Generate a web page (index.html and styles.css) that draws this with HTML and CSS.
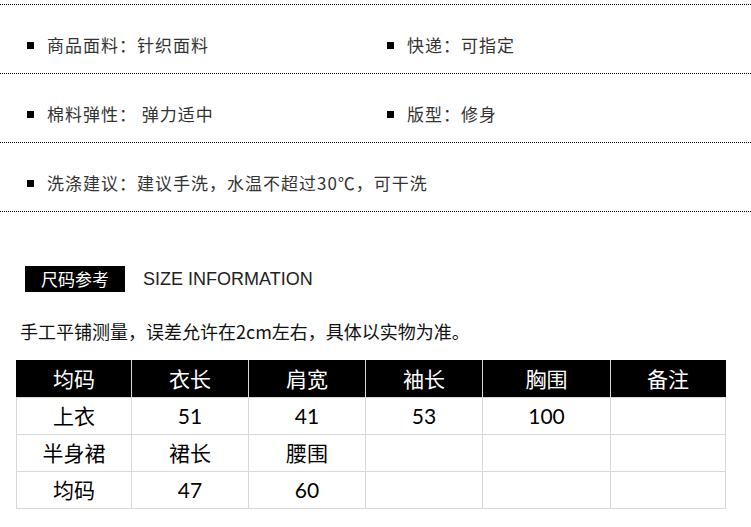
FILE: index.html
```html
<!DOCTYPE html>
<html lang="zh">
<head>
<meta charset="utf-8">
<title>商品信息</title>
<link rel="stylesheet" href="styles.css">
</head>
<body>
<div class="specs">
  <div class="spec-row">
    <div class="spec"><span class="dot"></span><span>商品面料：针织面料</span></div>
    <div class="spec"><span class="dot"></span><span>快递：可指定</span></div>
  </div>
  <div class="spec-row">
    <div class="spec"><span class="dot"></span><span>棉料弹性： 弹力适中</span></div>
    <div class="spec"><span class="dot"></span><span>版型：修身</span></div>
  </div>
  <div class="spec-row">
    <div class="spec wide"><span class="dot"></span><span>洗涤建议：建议手洗，水温不超过30℃，可干洗</span></div>
  </div>
</div>

<div class="size-head">
  <div class="size-tag">尺码参考</div>
  <div class="size-en">SIZE INFORMATION</div>
</div>
<p class="note">手工平铺测量，误差允许在2cm左右，具体以实物为准。</p>

<table class="size-table">
  <thead>
    <tr><th>均码</th><th>衣长</th><th>肩宽</th><th>袖长</th><th>胸围</th><th>备注</th></tr>
  </thead>
  <tbody>
    <tr><td>上衣</td><td>51</td><td>41</td><td>53</td><td>100</td><td></td></tr>
    <tr><td>半身裙</td><td>裙长</td><td>腰围</td><td></td><td></td><td></td></tr>
    <tr><td>均码</td><td>47</td><td>60</td><td></td><td></td><td></td></tr>
  </tbody>
</table>
</body>
</html>
```

FILE: styles.css
```css
html, body {
  margin: 0;
  padding: 0;
  background: #fff;
}
body {
  font-family: "Noto Sans CJK SC", "Liberation Sans", sans-serif;
  color: #222;
}
.specs {
  padding-top: 4px;
}
.spec-row {
  display: grid;
  grid-template-columns: 360px 1fr;
  border-top: 1px dotted #000;
  height: 68px;
  padding-left: 27px;
  box-sizing: content-box;
}
.spec-row:last-child {
  border-bottom: 1px dotted #000;
}
.spec {
  display: flex;
  align-items: center;
  gap: 13px;
  padding-top: 30px;
  height: 20px;
  font-size: 17px;
  letter-spacing: 1px;
  line-height: 20px;
  color: #333;
  white-space: nowrap;
}
.spec.wide {
  grid-column: 1 / 3;
}
.dot {
  width: 7px;
  height: 7px;
  background: #000;
  flex: none;
}
.size-head {
  display: flex;
  align-items: center;
  margin-top: 54px;
  margin-left: 25px;
  gap: 18px;
}
.size-tag {
  width: 100px;
  height: 26px;
  background: #000;
  color: #fff;
  font-size: 17px;
  line-height: 26px;
  text-align: center;
}
.size-en {
  font-family: "Liberation Sans", sans-serif;
  font-size: 18px;
  color: #222;
  line-height: 26px;
}
.note {
  margin: 27px 0 0 20px;
  font-size: 18px;
  line-height: 24px;
  color: #111;
}
.size-table {
  margin: 17px 0 0 16px;
  border-collapse: collapse;
  table-layout: fixed;
  width: 710px;
  font-family: "Lato", "Noto Sans CJK SC", sans-serif;
  font-size: 21px;
  color: #000;
}
.size-table th,
.size-table td {
  border: 1px solid #d9d9d9;
  height: 36px;
  padding: 0;
  text-align: center;
  vertical-align: middle;
  line-height: 24px;
}
.size-table th {
  background: #000;
  color: #fff;
  font-weight: normal;
  border-top-color: #000;
}
.size-table th:first-child { border-left-color: #000; }
.size-table th:last-child { border-right-color: #000; }
.size-table th:nth-child(1) { width: 114px; }
.size-table th:nth-child(2) { width: 116px; }
.size-table th:nth-child(3) { width: 116px; }
.size-table th:nth-child(4) { width: 116px; }
.size-table th:nth-child(5) { width: 127px; }
.size-table th:nth-child(6) { width: 114px; }
```
